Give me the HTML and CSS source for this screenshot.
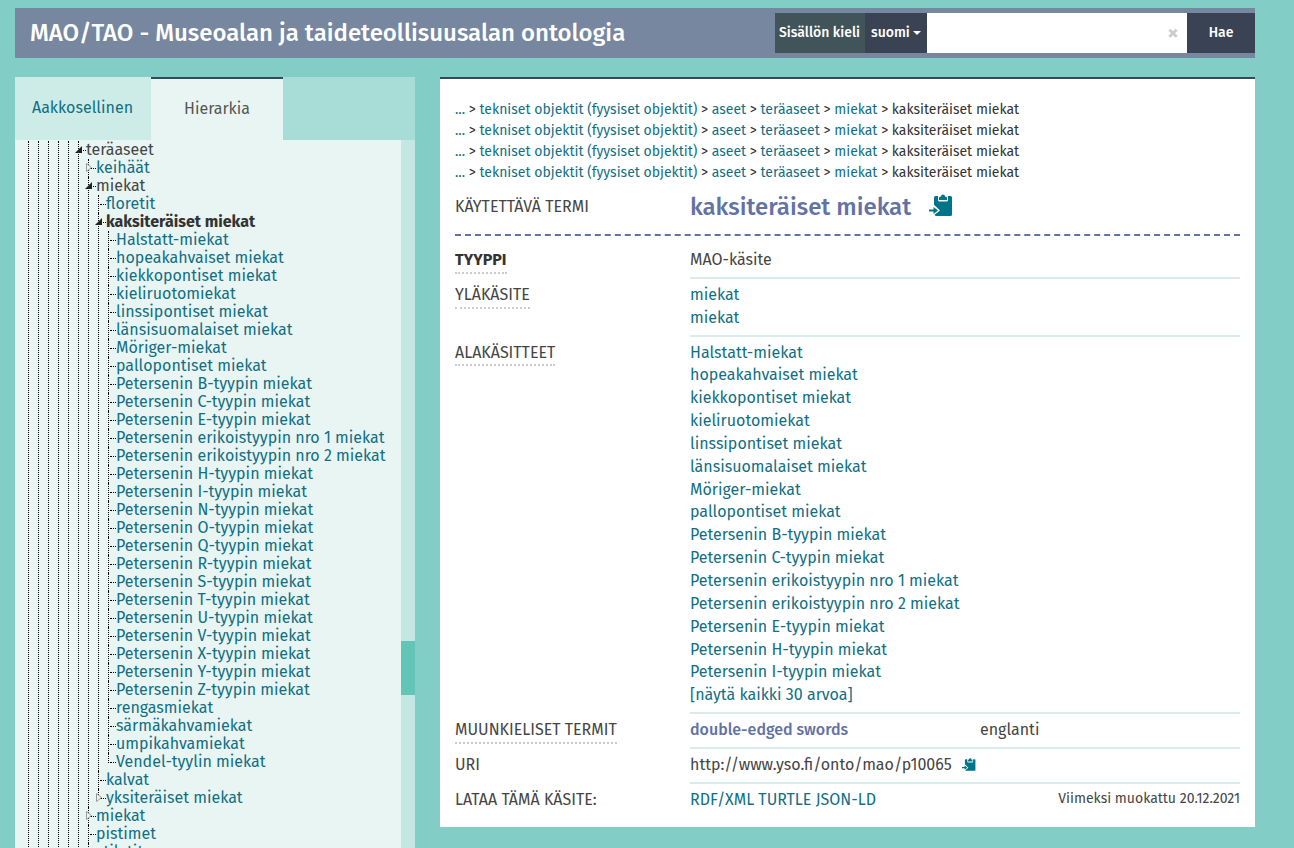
FILE: index.html
```html
<!DOCTYPE html>
<html lang="fi">
<head>
<meta charset="utf-8">
<title>MAO/TAO - Museoalan ja taideteollisuusalan ontologia</title>
<link rel="stylesheet" href="styles.css">
</head>
<body>
<svg class="sprite" aria-hidden="true">
  <symbol id="paste" viewBox="0 0 24 24">
    <path d="M6.500 2H9v4a1.500 1.500 0 0 0 1.500 1.500h7A1.500 1.500 0 0 0 19 6V2h2.500A1.500 1.500 0 0 1 23 3.500v17a1.500 1.500 0 0 1-1.500 1.500H7.500Q6 22 5.500 20.800L11 16.500 5 10.800V3.500A1.500 1.500 0 0 1 6.500 2z"/>
    <path d="M10 6V4a1.500 1.500 0 0 1 1.500-1.500h.5a2 2 0 0 1 4 0h.5A1.500 1.500 0 0 1 18 4v2z"/>
    <path d="M0 15.500h4.500V13l4.500 3.500L4.500 20v-2.500H0z"/>
  </symbol>
  <symbol id="node-closed" viewBox="0 0 6 9">
    <path d="M.5.500v8l5-4z" fill="#e8f5f3" stroke="#999"/>
  </symbol>
</svg>
<header class="topbar">
  <h1 class="title"><a href="#">MAO/TAO - Museoalan ja taideteollisuusalan ontologia</a></h1>
  <form class="search">
    <span class="lang-label">Sisällön kieli</span>
    <button type="button" class="lang-button">suomi <span class="caret"></span></button>
    <div class="search-box">
      <input type="text" class="search-input" aria-label="Hae">
      <button type="button" class="clear" aria-label="Tyhjennä">×</button>
    </div>
    <button type="submit" class="search-button">Hae</button>
  </form>
</header>
<div class="columns">
  <aside class="sidebar">
    <nav class="tabs">
      <a class="tab" href="#">Aakkosellinen</a>
      <a class="tab active" href="#">Hierarkia</a>
    </nav>
    <div class="tree-area">
      <div class="tree">
        <ul class="root"><li><ul><li><ul><li><ul><li><ul><li><ul>
          <li class="open"><a href="#" class="path">teräaseet</a>
            <ul>
              <li><svg class="closed"><use href="#node-closed"/></svg><a href="#">keihäät</a></li>
              <li class="open"><a href="#" class="path">miekat</a>
                <ul>
                  <li><a href="#">floretit</a></li>
                  <li class="open"><a href="#" class="current">kaksiteräiset miekat</a>
                    <ul>
                      <li><a href="#">Halstatt-miekat</a></li>
                      <li><a href="#">hopeakahvaiset miekat</a></li>
                      <li><a href="#">kiekkopontiset miekat</a></li>
                      <li><a href="#">kieliruotomiekat</a></li>
                      <li><a href="#">linssipontiset miekat</a></li>
                      <li><a href="#">länsisuomalaiset miekat</a></li>
                      <li><a href="#">Möriger-miekat</a></li>
                      <li><a href="#">pallopontiset miekat</a></li>
                      <li><a href="#">Petersenin B-tyypin miekat</a></li>
                      <li><a href="#">Petersenin C-tyypin miekat</a></li>
                      <li><a href="#">Petersenin E-tyypin miekat</a></li>
                      <li><a href="#">Petersenin erikoistyypin nro 1 miekat</a></li>
                      <li><a href="#">Petersenin erikoistyypin nro 2 miekat</a></li>
                      <li><a href="#">Petersenin H-tyypin miekat</a></li>
                      <li><a href="#">Petersenin I-tyypin miekat</a></li>
                      <li><a href="#">Petersenin N-tyypin miekat</a></li>
                      <li><a href="#">Petersenin O-tyypin miekat</a></li>
                      <li><a href="#">Petersenin Q-tyypin miekat</a></li>
                      <li><a href="#">Petersenin R-tyypin miekat</a></li>
                      <li><a href="#">Petersenin S-tyypin miekat</a></li>
                      <li><a href="#">Petersenin T-tyypin miekat</a></li>
                      <li><a href="#">Petersenin U-tyypin miekat</a></li>
                      <li><a href="#">Petersenin V-tyypin miekat</a></li>
                      <li><a href="#">Petersenin X-tyypin miekat</a></li>
                      <li><a href="#">Petersenin Y-tyypin miekat</a></li>
                      <li><a href="#">Petersenin Z-tyypin miekat</a></li>
                      <li><a href="#">rengasmiekat</a></li>
                      <li><a href="#">särmäkahvamiekat</a></li>
                      <li><a href="#">umpikahvamiekat</a></li>
                      <li class="last"><a href="#">Vendel-tyylin miekat</a></li>
                    </ul>
                  </li>
                  <li><a href="#">kalvat</a></li>
                  <li class="last"><svg class="closed"><use href="#node-closed"/></svg><a href="#">yksiteräiset miekat</a></li>
                </ul>
              </li>
              <li><svg class="closed"><use href="#node-closed"/></svg><a href="#">miekat</a></li>
              <li><a href="#">pistimet</a></li>
              <li><a href="#">stiletit</a></li>
            </ul>
          </li>
        </ul></li></ul></li></ul></li></ul></li></ul></li></ul>
      </div>
      <div class="scroll-track"><div class="scroll-thumb"></div></div>
    </div>
  </aside>
  <main class="concept">
    <div class="crumbs">
      <div><a href="#">...</a> &gt; <a href="#">tekniset objektit (fyysiset objektit)</a> &gt; <a href="#">aseet</a> &gt; <a href="#">teräaseet</a> &gt; <a href="#">miekat</a> &gt; kaksiteräiset miekat</div>
      <div><a href="#">...</a> &gt; <a href="#">tekniset objektit (fyysiset objektit)</a> &gt; <a href="#">aseet</a> &gt; <a href="#">teräaseet</a> &gt; <a href="#">miekat</a> &gt; kaksiteräiset miekat</div>
      <div><a href="#">...</a> &gt; <a href="#">tekniset objektit (fyysiset objektit)</a> &gt; <a href="#">aseet</a> &gt; <a href="#">teräaseet</a> &gt; <a href="#">miekat</a> &gt; kaksiteräiset miekat</div>
      <div><a href="#">...</a> &gt; <a href="#">tekniset objektit (fyysiset objektit)</a> &gt; <a href="#">aseet</a> &gt; <a href="#">teräaseet</a> &gt; <a href="#">miekat</a> &gt; kaksiteräiset miekat</div>
    </div>
    <div class="term-row">
      <span class="term-label">KÄYTETTÄVÄ TERMI</span>
      <div class="term"><h2>kaksiteräiset miekat</h2><button type="button" class="copy" aria-label="Kopioi termi"><svg class="icon-large"><use href="#paste"/></svg></button></div>
    </div>
    <div class="row">
      <div class="label"><span class="hint strong">TYYPPI</span></div>
      <div class="value">MAO-käsite</div>
    </div>
    <div class="row">
      <div class="label"><span class="hint">YLÄKÄSITE</span></div>
      <ul class="value">
        <li><a href="#">miekat</a></li>
        <li><a href="#">miekat</a></li>
      </ul>
    </div>
    <div class="row">
      <div class="label"><span class="hint">ALAKÄSITTEET</span></div>
      <ul class="value">
        <li><a href="#">Halstatt-miekat</a></li>
        <li><a href="#">hopeakahvaiset miekat</a></li>
        <li><a href="#">kiekkopontiset miekat</a></li>
        <li><a href="#">kieliruotomiekat</a></li>
        <li><a href="#">linssipontiset miekat</a></li>
        <li><a href="#">länsisuomalaiset miekat</a></li>
        <li><a href="#">Möriger-miekat</a></li>
        <li><a href="#">pallopontiset miekat</a></li>
        <li><a href="#">Petersenin B-tyypin miekat</a></li>
        <li><a href="#">Petersenin C-tyypin miekat</a></li>
        <li><a href="#">Petersenin erikoistyypin nro 1 miekat</a></li>
        <li><a href="#">Petersenin erikoistyypin nro 2 miekat</a></li>
        <li><a href="#">Petersenin E-tyypin miekat</a></li>
        <li><a href="#">Petersenin H-tyypin miekat</a></li>
        <li><a href="#">Petersenin I-tyypin miekat</a></li>
        <li><a href="#">[näytä kaikki 30 arvoa]</a></li>
      </ul>
    </div>
    <div class="row">
      <div class="label"><span class="hint">MUUNKIELISET TERMIT</span></div>
      <div class="value translation"><span class="foreign">double-edged swords</span><span>englanti</span></div>
    </div>
    <div class="row">
      <div class="label">URI</div>
      <div class="value uri"><span>http://www.yso.fi/onto/mao/p10065</span><button type="button" class="copy" aria-label="Kopioi URI"><svg class="icon-small"><use href="#paste"/></svg></button></div>
    </div>
    <div class="row">
      <div class="label">LATAA TÄMÄ KÄSITE:</div>
      <div class="value download"><span><a href="#">RDF/XML</a> <a href="#">TURTLE</a> <a href="#">JSON-LD</a></span><span class="modified">Viimeksi muokattu 20.12.2021</span></div>
    </div>
  </main>
</div>
</body>
</html>
```
FILE: styles.css
```css
* { box-sizing: border-box; }

body {
  margin: 0;
  padding: 8px 39px 0 15px;
  background: #82cec6;
  color: #454545;
  font: 16px/1.428 "Fira Sans", "Noto Sans", sans-serif;
}

a { color: #106f85; text-decoration: none; }
ul { list-style: none; margin: 0; padding: 0; }
button, input { font: inherit; border: 0; padding: 0; margin: 0; border-radius: 0; }
button { cursor: pointer; }
.sprite { display: none; }

/* header */
.topbar {
  display: flex;
  justify-content: space-between;
  height: 50px;
  padding: 5px 0 5px 15px;
  background: #76879f;
}
.title { margin: 0; font-size: 24px; font-weight: 500; line-height: 40px; }
.title a { color: #fff; }
.search {
  display: flex;
  width: 480px;
  color: #fff;
  font-size: 14px;
  font-weight: 500;
  line-height: 40px;
}
.lang-label { width: 90px; padding-left: 4px; background: #405459; white-space: nowrap; }
.lang-button {
  width: 62px;
  padding-left: 6px;
  background: #3a4354;
  color: #fff;
  text-align: left;
  white-space: nowrap;
}
.caret {
  display: inline-block;
  border: 4px solid transparent;
  border-top-color: #fff;
  border-bottom: 0;
  vertical-align: middle;
}
.search-box { display: flex; flex: 1; min-width: 0; background: #fff; }
.search-input { flex: 1; min-width: 0; padding-left: 10px; background: none; }
.clear { width: 28px; background: none; color: #ccc; font-size: 22px; font-weight: 700; }
.search-button { width: 68px; background: #3a4354; color: #fff; }

/* two columns */
.columns { display: flex; align-items: flex-start; gap: 25px; margin-top: 19px; }

.sidebar {
  display: flex;
  flex-direction: column;
  width: 400px;
  height: calc(100vh - 77px);
  flex: none;
}
.tabs { display: flex; height: 63px; flex: none; background: #a8dcd6; }
.tab { padding: 0 18px 0 17px; background: #cdebe7; line-height: 62px; }
.tab.active {
  padding: 0 33px;
  border-top: 2px solid #2e4d58;
  background: #e8f5f3;
  color: #555;
  line-height: 60px;
}
.tree-area { display: flex; flex: 1; min-height: 0; overflow: hidden; }
.tree { flex: 1; padding-top: 1px; background: #e8f5f3; line-height: 18px; overflow: hidden; }
.scroll-track { width: 14px; padding-top: 501px; background: #c5e7e3; }
.scroll-thumb { height: 54px; background: #62c5b8; }

/* hierarchy lines */
.root { margin-left: 13px; }
.tree ul ul { margin-left: 10px; }
.tree li { position: relative; }
.tree li::before {
  content: "";
  position: absolute;
  top: 0;
  left: 0;
  height: 100%;
  border-left: 1px dotted #000;
}
.tree li.last::before { height: 10px; }
.tree a { display: flex; align-items: center; height: 18px; white-space: nowrap; }
.tree a::before {
  content: "";
  width: 6px;
  margin-left: 2px;
  border-top: 1px dotted #000;
}
.tree .path { color: #454545; }
.tree .current { color: #333; font-weight: 700; }
.tree .open::after {
  content: "";
  position: absolute;
  top: 5px;
  left: -3px;
  width: 7px;
  height: 7px;
  background: #222;
  clip-path: polygon(100% 0, 100% 100%, 0 100%);
}
.closed { position: absolute; top: 4px; left: -2px; width: 6px; height: 9px; }

/* concept panel */
.concept {
  flex: 1;
  min-width: 0;
  padding: 20px 15px 10px;
  border-top: 2px solid #2e4d58;
  background: #fff;
}
.crumbs { color: #333; font-size: 14px; line-height: 21px; }
.term-row {
  display: flex;
  height: 53px;
  border-bottom: 2px dashed #6272a4;
  margin-bottom: 8px;
}
.term-label { width: 235px; flex: none; line-height: 48px; }
.term { display: flex; align-items: flex-start; gap: 18px; }
.term h2 { margin: 0; color: #6272a4; font-size: 24px; font-weight: 500; line-height: 48px; }
.copy { display: flex; background: none; color: #00748a; }
.copy svg { fill: currentColor; }
.term .copy { margin-top: 11px; }
.icon-large { width: 24px; height: 24px; }
.icon-small { width: 14px; height: 14px; }

.row { display: flex; }
.label { width: 235px; flex: none; padding-top: 5px; }
.hint { display: inline-block; border-bottom: 2px dotted #ccc; }
.strong { color: #333; font-weight: 700; }
.value {
  flex: 1;
  min-width: 0;
  padding: 5px 0;
  border-bottom: 2px solid #d9ece9;
}
.row:last-child .value { border-bottom: 0; }
.translation { display: flex; }
.foreign { width: 290px; color: #6272a4; font-weight: 500; }
.uri { display: flex; align-items: center; gap: 10px; }
.download { display: flex; justify-content: space-between; }
.modified { font-size: 14px; }
```
